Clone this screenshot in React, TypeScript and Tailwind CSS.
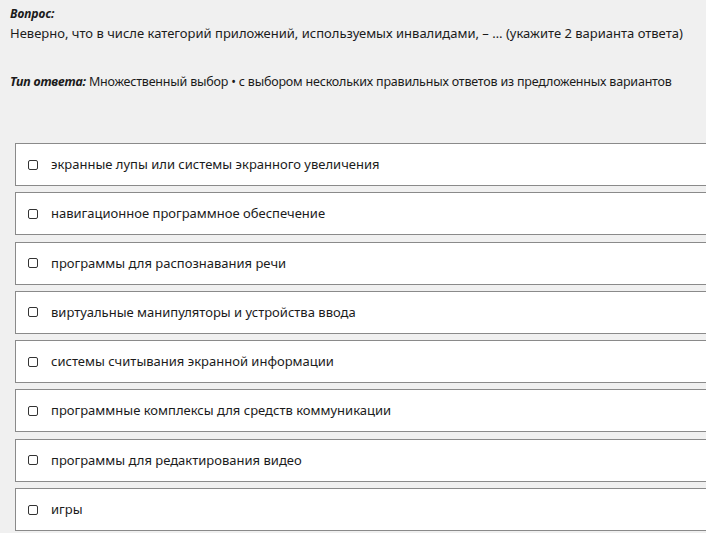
import React from "react";

const options = [
  "экранные лупы или системы экранного увеличения",
  "навигационное программное обеспечение",
  "программы для распознавания речи",
  "виртуальные манипуляторы и устройства ввода",
  "системы считывания экранной информации",
  "программные комплексы для средств коммуникации",
  "программы для редактирования видео",
  "игры",
];

export default function App() {
  return (
    <div
      className="w-[706px] h-[533px] overflow-hidden bg-[#f0f0f0] text-[#1b1b1b] text-[13px] leading-[17px]"
      style={{ fontFamily: '"Noto Sans", "Open Sans", sans-serif' }}
    >
      <div className="pl-[10px] pt-[5px]">
        <div className="font-bold italic text-[12px]">Вопрос:</div>
        <div className="mt-[3px]">
          Неверно, что в числе категорий приложений, используемых инвалидами, – … (укажите 2 варианта ответа)
        </div>
        <div className="mt-[31px] whitespace-nowrap tracking-[-0.2px] text-[12.5px]">
          <span className="font-bold italic">Тип ответа:</span> Множественный выбор • с выбором нескольких правильных ответов из предложенных вариантов
        </div>
      </div>
      <div className="mt-[53px] ml-[15px] w-[720px] flex flex-col gap-[6.3px]">
        {options.map((o) => (
          <label
            key={o}
            className="h-[43px] bg-white border border-[#8a8a8a] flex items-center pl-[12px]"
          >
            <span className="w-[10px] h-[10px] border border-[#333] rounded-[2px] bg-white shrink-0" />
            <span className="ml-[13px]">{o}</span>
          </label>
        ))}
      </div>
    </div>
  );
}
